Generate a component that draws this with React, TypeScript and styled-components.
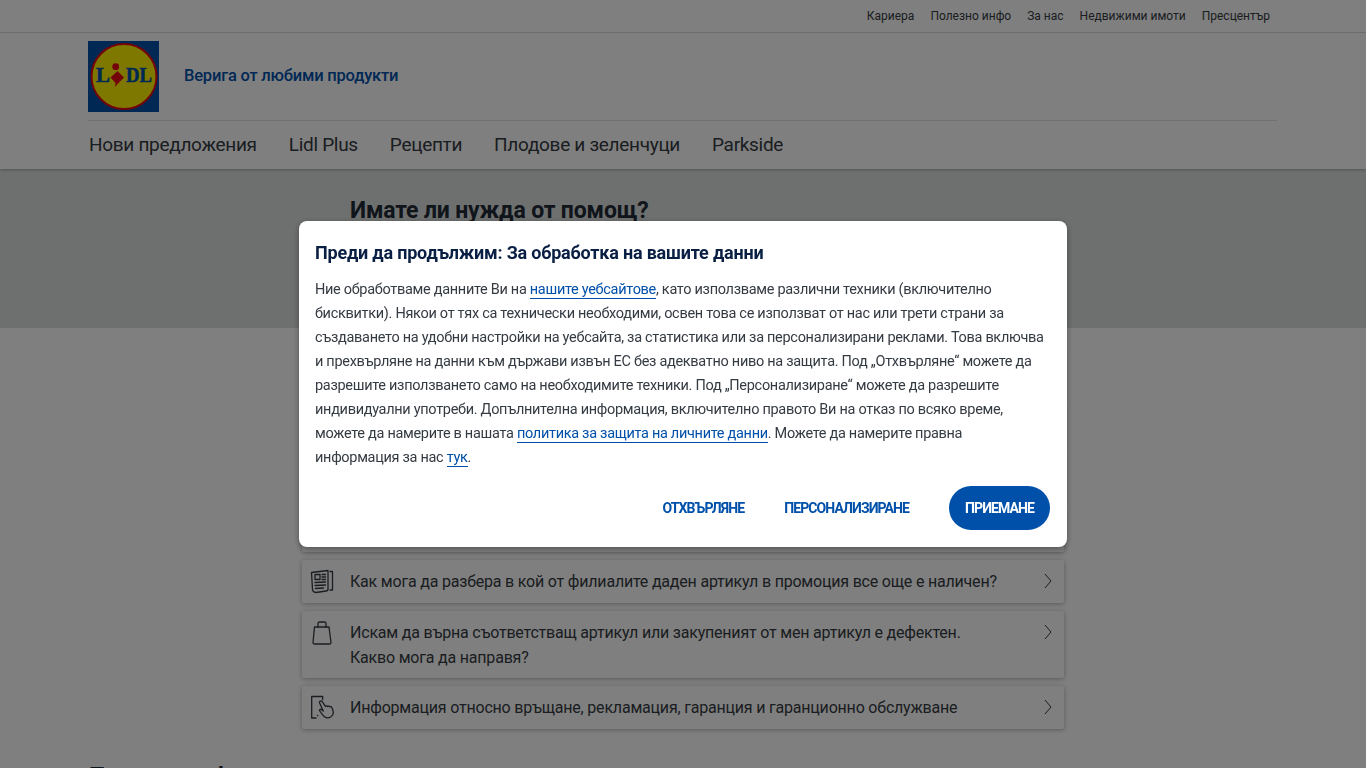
import React from 'react';
import styled, { createGlobalStyle } from 'styled-components';

const GlobalStyle = createGlobalStyle`
  html, body {
    margin: 0;
    padding: 0;
    background: #fff;
    font-family: Roboto, "Noto Sans", sans-serif;
    color: #353b42;
  }
`;

const Page = styled.div`
  height: 768px;
  overflow: hidden;
`;

const TopBar = styled.div`
  height: 32px;
  border-bottom: 1px solid #e3e3e3;
  display: flex;
  justify-content: flex-end;
  align-items: center;
  gap: 16px;
  padding-right: 96px;
  font-size: 12px;
`;

const Header = styled.header`
  height: 136px;
  padding: 0 89px 0 88px;
  box-shadow: 0 1px 3px rgba(0, 0, 0, 0.25);
  position: relative;
  display: flex;
  flex-direction: column;
`;

const Brand = styled.div`
  height: 87px;
  display: flex;
  align-items: center;
  gap: 25px;
  border-bottom: 1px solid #e3e3e3;
`;

const Tagline = styled.span`
  font-size: 16.5px;
  font-weight: 500;
  letter-spacing: -0.2px;
  color: #0050aa;
  margin-bottom: 2px;
`;

const Nav = styled.nav`
  display: flex;
  gap: 32px;
  padding: 12px 0 0 1px;
  font-size: 19px;
  letter-spacing: -0.3px;
`;

const Hero = styled.section`
  height: 159px;
  background: #dce0de;
  padding: 28px 0 0 350px;
  box-sizing: border-box;
`;

const HeroTitle = styled.h1`
  margin: 0;
  font-size: 23px;
  font-weight: 700;
  line-height: 28px;
  letter-spacing: -0.15px;
  color: #1f2a36;
`;

const List = styled.div`
  width: 762px;
  margin: 28px auto 0;
  display: flex;
  flex-direction: column;
  gap: 8px;
`;

const Card = styled.div`
  min-height: 43px;
  box-sizing: border-box;
  padding: 9px 12px 8px 48px;
  border-radius: 2px;
  box-shadow: 0 1px 5px rgba(0, 0, 0, 0.3);
  background: #fff;
  position: relative;
  display: flex;
  justify-content: space-between;
  font-size: 16px;
  letter-spacing: -0.2px;
  line-height: 25px;
`;

const IconSlot = styled.span`
  position: absolute;
  left: 8px;
  top: 9px;
  width: 24px;
  height: 26px;
`;

const Chevron = styled.svg`
  flex: none;
  width: 8px;
  height: 16px;
  margin-top: 4px;
`;

const BottomTitle = styled.h2`
  margin: 34px 0 0 89px;
  font-size: 23px;
  line-height: 28px;
  font-weight: 700;
  color: #1f2a36;
`;

const Overlay = styled.div`
  position: fixed;
  inset: 0;
  background: rgba(0, 0, 0, 0.5);
`;

const Modal = styled.div`
  position: fixed;
  left: 299px;
  top: 221px;
  width: 768px;
  height: 326px;
  box-sizing: border-box;
  padding: 16px 17px 17px 16px;
  background: #fff;
  border-radius: 8px;
  box-shadow: 0 2px 6px rgba(0, 0, 0, 0.35);
  display: flex;
  flex-direction: column;
`;

const ModalTitle = styled.h2`
  margin: 0;
  font-size: 18px;
  font-weight: 700;
  line-height: 32px;
  letter-spacing: -0.2px;
  color: #0a1f44;
`;

const ModalText = styled.p`
  margin: 9px 0 0;
  font-size: 14.5px;
  letter-spacing: -0.3px;
  line-height: 24px;
  white-space: nowrap;
  color: #353b42;
`;

const TextLink = styled.a`
  color: #0050aa;
  text-decoration: none;
  border-bottom: 1px solid #0050aa;
`;

const Actions = styled.div`
  margin-top: auto;
  display: flex;
  justify-content: flex-end;
  align-items: center;
  gap: 40px;
`;

const ActionButton = styled.button<{ $primary?: boolean }>`
  height: 44px;
  padding: 0 ${(p) => (p.$primary ? '16px' : '0')};
  border: 0;
  border-radius: 22px;
  background: ${(p) => (p.$primary ? '#0050aa' : 'transparent')};
  color: ${(p) => (p.$primary ? '#fff' : '#0050aa')};
  font-family: inherit;
  font-size: 14px;
  letter-spacing: -0.9px;
  font-weight: 700;
`;

const Logo = () => (
  <svg width="71" height="71" viewBox="0 0 71 71">
    <rect width="71" height="71" fill="#0050aa" />
    <circle cx="36" cy="35.500" r="32.500" fill="#fff000" stroke="#e60a14" strokeWidth="2" />
    <g fontFamily="Liberation Serif, serif" fontWeight="700" fontSize="20" fill="#0050aa" stroke="#0050aa" strokeWidth="0.500">
      <text x="8" y="41" textLength="14" lengthAdjust="spacingAndGlyphs">L</text>
      <text x="38" y="41" textLength="26" lengthAdjust="spacingAndGlyphs">DL</text>
    </g>
    <circle cx="27.700" cy="25.700" r="3.400" fill="#e60a14" />
    <path d="M29.500 30l6.500 6.500-6.500 6.500-2.500 3 .5-4-5-5.500z" fill="#e60a14" />
  </svg>
);

const NewsIcon = () => (
  <svg viewBox="0 0 24 26" width="24" height="26" fill="none" stroke="#353b42" strokeWidth="1.300" strokeLinecap="round" strokeLinejoin="round">
    <path d="M1.500 3.500L18 1.500V20a2 2 0 0 1-2 2L6 23.500a3.500 3.500 0 0 1-3.500-3z" />
    <path d="M20 2.500h2.500V21H20" />
    <rect x="5" y="5.500" width="5" height="5" />
    <path d="M12 5.500h3.500M12 8h3.500M12 10.500h3.500M5 13.500l10.500-.5M5 16.500l10.500-.5M5.500 19.500l8-.5" />
  </svg>
);

const BagIcon = () => (
  <svg viewBox="0 0 24 26" width="24" height="26" fill="none" stroke="#353b42" strokeWidth="1.300" strokeLinecap="round" strokeLinejoin="round">
    <path d="M4.500 7h14.500l2 15.500a1.500 1.500 0 0 1-1.500 1.500H4.500A1.500 1.500 0 0 1 3 22.500z" />
    <path d="M8 7V3.500A1.500 1.500 0 0 1 9.500 2h5A1.500 1.500 0 0 1 16 3.500V7" />
  </svg>
);

const TouchIcon = () => (
  <svg viewBox="0 0 24 26" width="24" height="26" fill="none" stroke="#353b42" strokeWidth="1.300" strokeLinecap="round" strokeLinejoin="round">
    <path d="M12.700 4.500v-3H1.700V23H6" />
    <path d="M9.600 8c-.6-1.600 1.600-2.800 2.600-1.400l3.300 4.800c.8-.8 1.700-.6 2.200.1.800-.6 1.700-.4 2.200.4.700-.4 1.500-.2 1.900.5l1.200 3c.7 2.500-.2 5-2 6.300-2.200 1.400-5 1.300-6.800-.3-1.600-1.400-3.500-3.800-4.500-5.600-.6-1 .6-2 1.600-1.300l2 1.500z" />
    <path d="M7.500 20.500h.3" />
  </svg>
);

const ChevronIcon = () => (
  <Chevron viewBox="0 0 8 16" fill="none" stroke="#353b42" strokeWidth="1">
    <path d="M1 1l6 7-6 7" />
  </Chevron>
);

const hiddenRows = [
  'Какво е работното време на нашите магазини?',
  'Как мога да се свържа с Обслужване на клиенти?',
  'Къде мога да намеря най-близкия филиал?',
  'Мога ли да получа информация за артикул от каталога?',
];

const topLinks = ['Кариера', 'Полезно инфо', 'За нас', 'Недвижими имоти', 'Пресцентър'];
const navLinks = ['Нови предложения', 'Lidl Plus', 'Рецепти', 'Плодове и зеленчуци', 'Parkside'];

export default function App() {
  return (
    <Page>
      <GlobalStyle />
      <TopBar>
        {topLinks.map((l) => <span key={l}>{l}</span>)}
      </TopBar>
      <Header>
        <Brand>
          <Logo />
          <Tagline>Верига от любими продукти</Tagline>
        </Brand>
        <Nav>
          {navLinks.map((l) => <span key={l}>{l}</span>)}
        </Nav>
      </Header>
      <Hero>
        <HeroTitle>Имате ли нужда от помощ?</HeroTitle>
      </Hero>
      <List>
        {hiddenRows.map((r) => (
          <Card key={r}>
            {r}
            <ChevronIcon />
          </Card>
        ))}
        <Card>
          <IconSlot><NewsIcon /></IconSlot>
          Как мога да разбера в кой от филиалите даден артикул в промоция все още е наличен?
          <ChevronIcon />
        </Card>
        <Card>
          <IconSlot><BagIcon /></IconSlot>
          <span>
            Искам да върна съответстващ артикул или закупеният от мен артикул е дефектен.
            <br />
            Какво мога да направя?
          </span>
          <ChevronIcon />
        </Card>
        <Card>
          <IconSlot><TouchIcon /></IconSlot>
          Информация относно връщане, рекламация, гаранция и гаранционно обслужване
          <ChevronIcon />
        </Card>
      </List>
      <BottomTitle>Полезна информация</BottomTitle>
      <Overlay />
      <Modal>
        <ModalTitle>Преди да продължим: За обработка на вашите данни</ModalTitle>
        <ModalText>
          Ние обработваме данните Ви на <TextLink>нашите уебсайтове</TextLink>, като използваме различни техники (включително
          <br />
          бисквитки). Някои от тях са технически необходими, освен това се използват от нас или трети страни за
          <br />
          създаването на удобни настройки на уебсайта, за статистика или за персонализирани реклами. Това включва
          <br />
          и прехвърляне на данни към държави извън ЕС без адекватно ниво на защита. Под „Отхвърляне“ можете да
          <br />
          разрешите използването само на необходимите техники. Под „Персонализиране“ можете да разрешите
          <br />
          индивидуални употреби. Допълнителна информация, включително правото Ви на отказ по всяко време,
          <br />
          можете да намерите в нашата <TextLink>политика за защита на личните данни</TextLink>. Можете да намерите правна
          <br />
          информация за нас <TextLink>тук</TextLink>.
        </ModalText>
        <Actions>
          <ActionButton>ОТХВЪРЛЯНЕ</ActionButton>
          <ActionButton>ПЕРСОНАЛИЗИРАНЕ</ActionButton>
          <ActionButton $primary>ПРИЕМАНЕ</ActionButton>
        </Actions>
      </Modal>
    </Page>
  );
}
